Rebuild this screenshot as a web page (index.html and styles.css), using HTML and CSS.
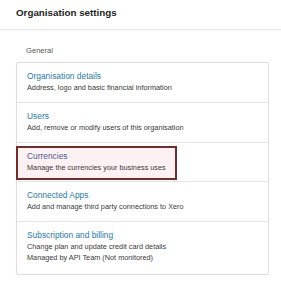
FILE: index.html
```html
<!DOCTYPE html>
<html lang="en">
  <head>
    <title>Organisation settings</title>
    <meta charset="utf-8" />
    <link rel="stylesheet" href="styles.css">
  </head>
  <body>
    <header class="page-header">
      <h1>Organisation settings</h1>
    </header>
    <main class="settings">
      <h2 class="section-title">General</h2>
      <ul class="settings-list">
        <li class="settings-item">
          <a href="#" class="item-title">Organisation details</a>
          <p>Address, logo and basic financial information</p>
        </li>
        <li class="settings-item">
          <a href="#" class="item-title">Users</a>
          <p>Add, remove or modify users of this organisation</p>
        </li>
        <li class="settings-item settings-item-marked">
          <div class="highlight">
            <a href="#" class="item-title">Currencies</a>
            <p>Manage the currencies your business uses</p>
          </div>
        </li>
        <li class="settings-item">
          <a href="#" class="item-title">Connected Apps</a>
          <p>Add and manage third party connections to Xero</p>
        </li>
        <li class="settings-item settings-item-last">
          <a href="#" class="item-title">Subscription and billing</a>
          <p>Change plan and update credit card details</p>
          <p>Managed by API Team (Not monitored)</p>
        </li>
      </ul>
    </main>
  </body>
</html>
```

FILE: styles.css
```css
body {
  margin: 0;
  background: #fff;
  font-family: "Liberation Sans", Arial, sans-serif;
  color: #333;
}

.page-header {
  height: 29px;
  padding: 0 16px;
  border-bottom: 1px solid #e6e6e6;
  box-shadow: 0 1px 2px rgba(0, 0, 0, 0.04);
}

.page-header h1 {
  margin: 0;
  font-size: 9.8px;
  line-height: 26px;
  font-weight: bold;
  color: #1e1e1e;
}

.settings {
  padding: 16px 12px 0 16px;
}

.section-title {
  margin: 0 0 6px 10px;
  font-size: 7.6px;
  line-height: 10px;
  font-weight: normal;
  color: #555;
}

.settings-list {
  list-style: none;
  margin: 0;
  padding: 0;
  border: 1px solid #dedede;
  border-radius: 2px;
  box-shadow: 0 1px 2px rgba(0, 0, 0, 0.06);
}

.settings-item {
  padding: 7px 10px 9px;
  border-top: 1px solid #e4e4e4;
}

.settings-item:first-child {
  border-top: none;
}

.settings-item-last {
  padding-bottom: 11px;
}

.item-title {
  display: block;
  font-size: 8.4px;
  line-height: 12px;
  color: #2a79a8;
  text-decoration: none;
}

.settings-item p {
  margin: 0;
  font-size: 7.3px;
  line-height: 11px;
  color: #3a3a3a;
}

.settings-item-marked {
  padding: 3px 0 1px;
}

.highlight {
  width: fit-content;
  margin-left: -1px;
  padding: 2px 9px 5px 9px;
  border: 2px solid #6e2e2b;
  background: #fdf1f4;
}

.highlight .item-title {
  color: #4a5a94;
}
```
